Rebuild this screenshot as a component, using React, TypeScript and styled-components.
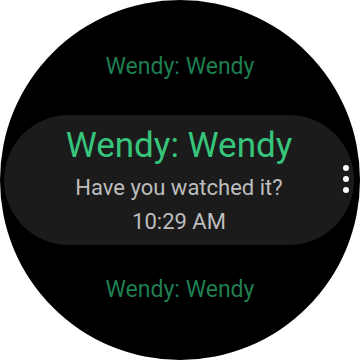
import React from "react";
import styled, { createGlobalStyle } from "styled-components";

const Global = createGlobalStyle`
  html, body { margin: 0; padding: 0; background: #ffffff; }
  body { font-family: Roboto, "Noto Sans", sans-serif; }
`;

const Watch = styled.div`
  width: 360px;
  height: 360px;
  border-radius: 50%;
  background: #000;
  overflow: hidden;
  position: relative;
  display: flex;
  flex-direction: column;
  align-items: center;
`;

const SideItem = styled.div<{ $top: number }>`
  margin-top: ${(p) => p.$top}px;
  height: 30px;
  line-height: 30px;
  font-size: 23px;
  color: #1f7f50;
  text-align: center;
`;

const Card = styled.div`
  margin-top: 33px;
  width: 350px;
  height: 130px;
  margin-left: -2px;
  border-radius: 65px;
  background: #1b1b1b;
  display: flex;
  flex-direction: column;
  align-items: center;
  padding-top: 10px;
  box-sizing: border-box;
  position: relative;
`;

const Title = styled.div`
  font-size: 35px;
  line-height: 42px;
  margin-bottom: 3.5px;
  color: #37c57c;
`;

const Line = styled.div`
  font-size: 22px;
  line-height: 34px;
  color: #bdbdbd;
`;

const Dots = styled.div`
  position: absolute;
  right: 5px;
  top: 50px;
  display: flex;
  flex-direction: column;
  gap: 5px;
`;

const Dot = styled.span`
  width: 6px;
  height: 6px;
  border-radius: 50%;
  background: #fff;
`;

export default function App() {
  return (
    <>
      <Global />
      <Watch>
        <SideItem $top={52}>Wendy: Wendy</SideItem>
        <Card>
          <Title>Wendy: Wendy</Title>
          <Line>Have you watched it?</Line>
          <Line>10:29 AM</Line>
          <Dots>
            <Dot />
            <Dot />
            <Dot />
          </Dots>
        </Card>
        <SideItem $top={30}>Wendy: Wendy</SideItem>
      </Watch>
    </>
  );
}
